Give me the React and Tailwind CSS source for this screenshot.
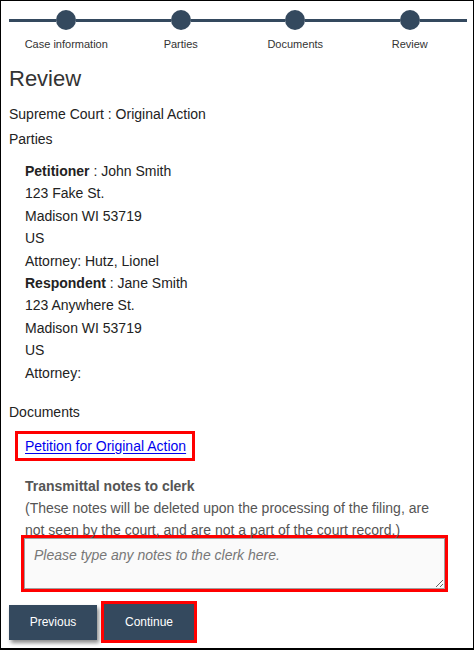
const steps = ['Case information', 'Parties', 'Documents', 'Review'];

const parties = [
  { role: 'Petitioner', name: 'John Smith', lines: ['123 Fake St.', 'Madison WI 53719', 'US', 'Attorney: Hutz, Lionel'] },
  { role: 'Respondent', name: 'Jane Smith', lines: ['123 Anywhere St.', 'Madison WI 53719', 'US', 'Attorney:'] },
];

function Stepper() {
  return (
    <div className="grid grid-cols-4 pl-2 pr-[6px]">
      {steps.map((s) => (
        <div key={s} className="flex flex-col">
          <div className="flex items-center pt-[9px]">
            <div className="flex-1 h-[3px] bg-[#34495e]" />
            <div className="w-5 h-5 rounded-full bg-[#34495e]" />
            <div className="flex-1 h-[3px] bg-[#34495e]" />
          </div>
          <div className="mt-[7px] text-center text-[11px] leading-[14px] text-[#333]">{s}</div>
        </div>
      ))}
    </div>
  );
}

export default function App() {
  return (
    <div
      className="w-[474px] h-[650px] border border-b-2 border-black bg-white text-[14px] text-[#222] overflow-hidden"
      style={{ fontFamily: '"Liberation Sans", Arial, sans-serif' }}
    >
      <Stepper />

      <div className="px-2">
        <h1 className="mt-[15px] text-[22px] leading-[26px] text-[#333]">Review</h1>
        <div className="mt-[11px] leading-[22px]">Supreme Court : Original Action</div>
        <div className="mt-[3px] leading-[22px]">Parties</div>

        <div className="mt-[10px] pl-4 leading-[22.4px]">
          {parties.map((p) => (
            <div key={p.role}>
              <div>
                <span className="font-bold">{p.role}</span> : {p.name}
              </div>
              {p.lines.map((l) => (
                <div key={l}>{l}</div>
              ))}
            </div>
          ))}
        </div>

        <div className="mt-[17px] leading-[22px]">Documents</div>

        <div className="mt-2 ml-[6px] inline-block border-[3px] border-[#ff0000] pl-[7px] pr-[6px]">
          <a href="#" className="block leading-[24px] text-[#0000ee] underline underline-offset-2">
            Petition for Original Action
          </a>
        </div>

        <div className="mt-[14px] ml-4 w-[418px] leading-[22px] text-[#555]">
          <div className="font-bold">Transmittal notes to clerk</div>
          <div>
            (These notes will be deleted upon the processing of the filing, are not seen by the court, and are not a
            part of the court record.)
          </div>
        </div>

        <div className="-mt-[6px] ml-3 w-[427px] border-[3px] border-[#ff0000]">
          <textarea
            className="block w-full h-[51px] border border-[#a0a0a0] bg-[#fafafa] pl-[9px] pt-[8px] text-[14px] leading-[16px] italic placeholder:text-[#777] outline-none"
            placeholder="Please type any notes to the clerk here."
          />
        </div>

        <div className="mt-[9px] flex items-center gap-1">
          <button className="w-[88px] h-[35px] bg-[#34495e] text-white text-[12px] shadow-[2px_3px_4px_rgba(0,0,0,0.45)]">
            Previous
          </button>
          <div className="border-[3px] border-[#ff0000]">
            <button className="block w-[90px] h-[36px] bg-[#34495e] text-white text-[12px]">Continue</button>
          </div>
        </div>
      </div>
    </div>
  );
}
